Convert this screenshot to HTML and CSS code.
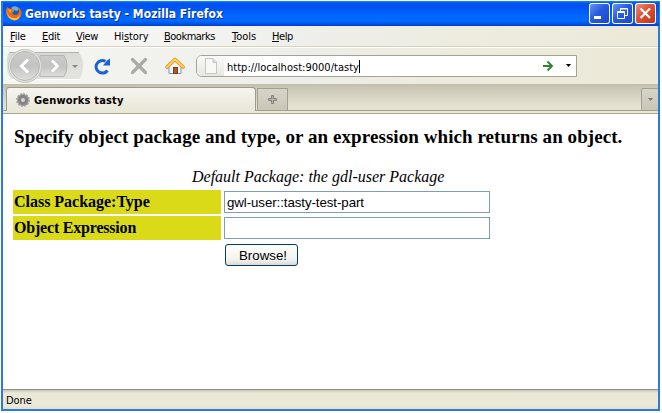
FILE: index.html
```
<!DOCTYPE html>
<html lang="en">
<head>
<meta charset="utf-8">
<title>Genworks tasty - Mozilla Firefox</title>
<link rel="stylesheet" href="styles.css">
</head>
<body>
<div class="window">
  <header class="titlebar">
    <svg class="firefox" width="18" height="18" viewBox="0 0 18 18">
      <circle cx="9" cy="9" r="7" fill="#245bab"/>
      <path d="M7 3 Q12 1 14 5 L12 7 L9 6 L8 9 L6 6Z" fill="#63b4e8"/>
      <path d="M2 3 L5 5 Q7 4 9 6 L7 8 Q7 11 11 11 Q14 10 14 7 L13 3 Q18 6 16 12 Q13 18 7 16 Q0 13 1 6Z" fill="#e66b16"/>
      <path d="M2 7 Q3 13 8 14 Q13 15 15 10 Q14 17 8 16 Q2 14 2 7Z" fill="#ffc646"/>
      <path d="M3 5 L7 6 L5 9Z" fill="#f5a33b"/>
    </svg>
    <span class="title">Genworks tasty - Mozilla Firefox</span>
    <div class="controls">
      <svg class="ctl" width="21" height="21" viewBox="0 0 21 21"><rect x="5" y="13" width="7" height="3" fill="#fff"/></svg>
      <svg class="ctl" width="21" height="21" viewBox="0 0 21 21"><path d="M8.500 8V5.500H15.500V12.500H13M8 6H16" fill="none" stroke="#fff"/><path d="M5.500 8.500H12.500V15.500H5.500ZM5 9.500H13" fill="none" stroke="#fff"/></svg>
      <svg class="ctl close" width="21" height="21" viewBox="0 0 21 21"><path d="M5.500 5.500L15 15M15 5.500L5.500 15" stroke="#fff" stroke-width="2.200"/></svg>
    </div>
  </header>
  <nav class="menubar">
    <span class="m-file"><u>F</u>ile</span><span class="m-edit"><u>E</u>dit</span><span class="m-view"><u>V</u>iew</span><span class="m-hist">Hi<u>s</u>tory</span><span class="m-book"><u>B</u>ookmarks</span><span class="m-tool"><u>T</u>ools</span><span class="m-help"><u>H</u>elp</span>
  </nav>
  <div class="toolbar">
    <svg class="backfwd" width="80" height="36" viewBox="0 0 80 36">
      <defs><linearGradient id="g" x1="0" y1="0" x2="0" y2="1"><stop offset="0" stop-color="#cbcbc9"/><stop offset=".5" stop-color="#c3c3c1"/><stop offset="1" stop-color="#dededb"/></linearGradient>
      <linearGradient id="b" x1="0" y1="0" x2="0" y2="1"><stop offset="0" stop-color="#d9d9d7"/><stop offset="1" stop-color="#e4e4e0"/></linearGradient></defs>
      <path d="M5 4.500H75Q79 10 79 18Q79 26 75 31.500H8Q2 26 3 18Q2 9 5 4.500Z" fill="url(#b)"/>
      <path d="M5 4.500H75" stroke="#b4b4b0"/><path d="M8 31.500H75" stroke="#fff"/>
      <path d="M36 7.500H60Q63 12 63 18Q63 24 60 28.500H36Z" fill="url(#g)" stroke="#b5b5b3"/>
      <circle cx="21" cy="18" r="16.500" fill="#e2e2df" stroke="#c6c6c3"/>
      <circle cx="21" cy="18" r="14.500" fill="url(#g)" stroke="#b9b9b7"/>
      <path d="M24 11.500L17.500 18L24 24.500" fill="none" stroke="#fff" stroke-width="3"/>
      <path d="M48 12.500L53.500 18L48 23.500" fill="none" stroke="#fff" stroke-width="2.700"/>
      <path d="M68 17H74L71 20Z" fill="#858582"/>
    </svg>
    <svg class="reload" width="18" height="18" viewBox="0 0 18 18"><path d="M14.500 13.500A6.300 6.300 0 1 1 12.500 4.300" fill="none" stroke="#1b62d5" stroke-width="3"/><path d="M10 8.500H17V1.500L14 3.500Z" fill="#1b62d5"/></svg>
    <svg class="stop" width="18" height="18" viewBox="0 0 18 18"><path d="M2.500 2.500L15.500 15.500M15.500 2.500L2.500 15.500" stroke="#ababa9" stroke-width="3.300" stroke-linecap="round"/></svg>
    <svg class="home" width="20" height="18" viewBox="0 0 20 18"><path d="M4 9L10 4L16 9V16.500H4Z" fill="#eff5fc" stroke="#7794bd"/><rect x="8.500" y="10.500" width="4" height="6" fill="#a45c25" stroke="#754019"/><path d="M2 10L10 2.500L18 10" fill="none" stroke="#d98d1b" stroke-width="3.600" stroke-linecap="round" stroke-linejoin="round"/><path d="M2 10L10 2.500L18 10" fill="none" stroke="#ffd14f" stroke-width="2.200" stroke-linecap="round"/></svg>
    <div class="address">
      <span class="identity"><svg width="14" height="16" viewBox="0 0 14 16"><path d="M1.500 .5H9L12.500 4V15.500H1.500Z" fill="#f8f8f7" stroke="#c5c5c1"/><path d="M9 .5V4.500H13" fill="#ddd" stroke="#c5c5c1"/></svg></span>
      <span class="url">http://localhost:9000/tasty</span><i class="caret"></i>
      <svg class="go" width="12" height="12" viewBox="0 0 12 12"><path d="M1 6H9M5.500 1.500L10 6L5.500 10.500" fill="none" stroke="#34852f" stroke-width="1.900"/></svg>
      <svg class="drop" width="5" height="3" viewBox="0 0 5 3"><path d="M0 0H5L2.500 3Z" fill="#000"/></svg>
    </div>
  </div>
  <div class="tabs">
    <div class="strip">
      <div class="tab">
        <svg width="16" height="16" viewBox="0 0 16 16"><circle cx="8" cy="8" r="5.900" fill="#929291" stroke="#a7a7a5" stroke-width="2" stroke-dasharray="2 1"/><circle cx="8" cy="8" r="5" fill="#858584"/><circle cx="8" cy="8" r="2" fill="#d5d5d1"/></svg>
        <span>Genworks tasty</span>
      </div>
      <div class="newtab"><svg width="9" height="9" viewBox="0 0 9 9"><path d="M3.500 .5H5.500V3.500H8.500V5.500H5.500V8.500H3.500V5.500H.5V3.500H3.500Z" fill="#b0b0a9" stroke="#85857f"/></svg></div>
      <div class="alltabs"><svg width="5" height="3" viewBox="0 0 5 3"><path d="M0 0H5L2.500 3Z" fill="#77776f"/></svg></div>
    </div>
  </div>
  <main class="page">
    <h1>Specify object package and type, or an expression which returns an object.</h1>
    <p>Default Package: the gdl-user Package</p>
    <form class="fields">
      <label for="cls">Class Package:Type</label><input id="cls" type="text" value="gwl-user::tasty-test-part">
      <label for="expr" class="tight">Object Expression</label><input id="expr" type="text">
      <button type="button">Browse!</button>
    </form>
  </main>
  <footer class="status">Done</footer>
</div>
</body>
</html>
```
FILE: styles.css
```
* { box-sizing: border-box; }
body { margin: 0; padding: 1px; width: 662px; height: 413px; background: #fff; overflow: hidden; color: #000; }
svg { display: block; flex: none; }
.window { width: 659px; height: 410px; border: solid #2e79dc; border-width: 0 2px 2px; display: flex; flex-direction: column; background: #fff; font: 11px "DejaVu Sans Condensed", "DejaVu Sans", sans-serif; white-space: nowrap; }
.titlebar { height: 25px; flex: none; display: flex; align-items: center; padding: 0 2px; margin-right: -1px; background: linear-gradient(#0997ff 0, #0053ee 2px, #0050ee 5px, #0065fe 14px, #006aff 20px, #005bee 22px, #003dd0 25px); }
.firefox { margin-top: -1px; }
.title { margin-left: 2px; font: bold 12px "DejaVu Sans Condensed", sans-serif; letter-spacing: .05px; color: #fff; text-shadow: 1px 1px #0b2f92; line-height: 24px; }
.controls { display: flex; gap: 2px; margin: -1px 1px 0 auto; }
.ctl { border-radius: 3px; box-shadow: inset 0 0 0 1px #fff; background: linear-gradient(135deg, #6f9af1, #285be0 45%, #1c47c9); }
.close { background: linear-gradient(135deg, #ef9a80, #df5132 45%, #b93212); }
.menubar { height: 21px; flex: none; display: flex; padding: 0 0 0 7px; line-height: 21px; background: linear-gradient(90deg, #fafafa, #efefeb 45%, #edecdf 70%, #ece9d8); border-bottom: 1px solid #d8d2bd; }
.menubar span { flex: none; }
.menubar u { text-underline-offset: 1px; }
.m-file { width: 32px; letter-spacing: -.2px; }
.m-edit { width: 34px; letter-spacing: -.3px; }
.m-view { width: 38px; letter-spacing: -.4px; }
.m-hist { width: 50px; letter-spacing: -.1px; }
.m-book { width: 68px; letter-spacing: -.5px; }
.m-tool { width: 40px; letter-spacing: 0; }
.m-help { letter-spacing: -.4px; }
.toolbar { height: 37px; flex: none; display: flex; align-items: center; background: linear-gradient(90deg, #f6f6f3, #ededea 45%, #ecebdd 70%, #ece9d8); border-top: 1px solid #fff; }
.backfwd { margin-left: 1px; }
.reload { margin-left: 9px; }
.stop { margin-left: 19px; }
.home { margin-left: 17px; }
.address { width: 381px; height: 22px; margin: 0 0 1px 11px; display: flex; align-items: center; background: #fff; border: 1px solid #a4a394; border-radius: 6px 0 0 6px; overflow: hidden; }
.identity { width: 27px; height: 20px; display: flex; align-items: center; justify-content: center; background: linear-gradient(#fafaf8, #e7e7e2); }
.url { margin-left: 3px; padding-top: 3px; letter-spacing: .02px; }
.caret { width: 1px; height: 13px; margin-top: 2px; background: #000; }
.go { margin-left: auto; }
.drop { margin: 0 5px 0 12px; }
.tabs { height: 30px; flex: none; padding-bottom: 2px; background: #e9e7d7; border-bottom: 1px solid #aaa796; }
.strip { height: 27px; display: flex; align-items: flex-end; padding-left: 3px; background: linear-gradient(#c2bdab 0, #c9c6b5 3px, #e4e2d1 22px); border-bottom: 1px solid #a2a093; }
.tab { width: 250px; height: 24px; margin-bottom: -1px; padding: 0 0 0 8px; display: flex; align-items: center; gap: 3px; background: linear-gradient(#f6f5f0, #e9e7d7); border: 1px solid #9c9b8e; border-bottom: 0; border-radius: 3px 4px 0 0; font-weight: bold; letter-spacing: .18px; }
.tab span { padding-top: 1px; }
.newtab, .alltabs { height: 22px; display: flex; align-items: center; justify-content: center; background: linear-gradient(#d7d5c8, #c9c6b8); border: 1px solid #a2a093; border-bottom: 0; }
.newtab { width: 31px; margin-left: 1px; }
.alltabs { width: 17px; margin-left: auto; border-right: 0; border-radius: 2px 0 0 0; }
.page { flex: 1; padding: 12px 0 0 10px; font-family: "Liberation Serif", serif; }
h1 { margin: 0 0 0 1px; font-size: 19px; line-height: 22px; letter-spacing: .07px; }
p { margin: 19px 0 3px 179px; font-size: 16px; line-height: 20px; font-style: italic; }
.fields { display: grid; grid-template-columns: 208px 266px; column-gap: 3px; row-gap: 2px; align-items: center; }
label { height: 24px; padding-left: 1px; background: #dada18; font: bold 16px/24px "Liberation Serif", serif; letter-spacing: -.02px; }
.tight { letter-spacing: -.2px; }
input { width: 266px; height: 22px; padding: 0 2px; border: 1px solid #7f9db9; border-radius: 0; background: #fff; color: #000; font: 13.3px "Liberation Sans", sans-serif; letter-spacing: -.08px; outline: 0; }
button { grid-column: 2; width: 73px; height: 22px; margin: 2px 0 0 1px; padding: 0 0 0 3px; border: 1px solid #003c74; border-radius: 3px; background: linear-gradient(#fff, #f2f2ed 75%, #dcd8cf); font: 13.3px "Liberation Sans", sans-serif; color: #000; }
.status { height: 20px; flex: none; padding-left: 3px; border-top: 1px solid #8f8e82; background: linear-gradient(#c8c5b6, #ebe8d8 3px, #ece9d8 15px, #e2dfcd); line-height: 21px; letter-spacing: -.1px; }
```
